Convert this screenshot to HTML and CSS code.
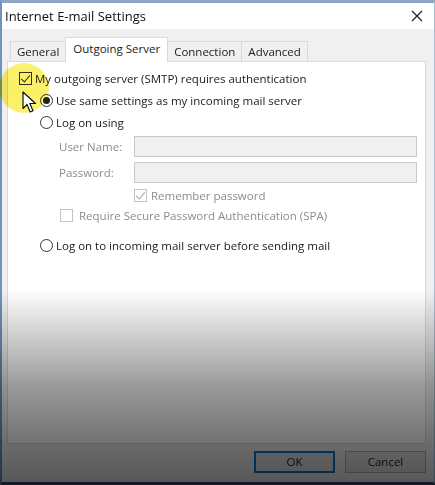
FILE: index.html
```html
<!DOCTYPE html>
<html lang="en">
<head>
  <meta charset="UTF-8">
  <title>Internet E-mail Settings</title>
  <link rel="stylesheet" href="styles.css">
</head>
<body>

<div class="window">
  <div class="titlebar">
    <span class="title">Internet E-mail Settings</span>
    <svg class="close" width="12" height="12" viewBox="0 0 12 12"><path d="M1 1L11 11M11 1L1 11" stroke="#222" stroke-width="1.2"/></svg>
  </div>

  <div class="dialog">
    <div class="tabs">
      <div class="tab">General</div>
      <div class="tab active">Outgoing Server</div>
      <div class="tab">Connection</div>
      <div class="tab">Advanced</div>
    </div>

    <div class="panel">
      <div class="row top">
        <span class="check checked"></span>
        <span>My outgoing server (SMTP) requires authentication</span>
      </div>
      <div class="row sub">
        <span class="radio selected"></span>
        <span>Use same settings as my incoming mail server</span>
      </div>
      <div class="row sub">
        <span class="radio"></span>
        <span>Log on using</span>
      </div>
      <div class="field">
        <label>User Name:</label>
        <span class="input"></span>
      </div>
      <div class="field">
        <label>Password:</label>
        <span class="input"></span>
      </div>
      <div class="row remember disabled">
        <span class="check checked"></span>
        <span>Remember password</span>
      </div>
      <div class="row spa disabled">
        <span class="check"></span>
        <span>Require Secure Password Authentication (SPA)</span>
      </div>
      <div class="row sub last">
        <span class="radio"></span>
        <span>Log on to incoming mail server before sending mail</span>
      </div>
    </div>

    <div class="footer">
      <div class="btn default">OK</div>
      <div class="btn">Cancel</div>
    </div>
  </div>

  <!-- video fade + click highlight -->
  <div class="shade"></div>
  <div class="spot"></div>
  <svg class="cursor" width="15" height="23" viewBox="0 0 15 23">
    <path d="M1 1L1 17.5L5 13.5L8.2 21L11 19.8L7.8 12.5L13.5 12.5Z" fill="#fff" stroke="#111" stroke-width="1.2" stroke-linejoin="round"/>
  </svg>
</div>

</body>
</html>
```

FILE: styles.css
```css
* {
  box-sizing: border-box;
}

body {
  margin: 0;
  width: 435px;
  height: 485px;
  overflow: hidden;
  font-family: "Open Sans", "Noto Sans", sans-serif;
  font-size: 11.5px;
  color: #1a1a1a;
}

.window {
  position: relative;
  height: 485px;
  background-color: #f0f0f0;
  border-top: 3px solid #8aa6c4;
  border-left: 2px solid #6f93ba;
  border-right: 1px solid #a8bcd2;
  border-bottom: 3px solid #3d4a66;
}

.titlebar {
  height: 26px;
  background-color: #fff;
  display: flex;
  align-items: center;
  justify-content: space-between;
  padding: 0 11px 0 3px;
}

.title {
  font-size: 13px;
  color: #111;
}

.dialog {
  padding: 8px 8px 0 5px;
}

.tabs {
  display: flex;
  align-items: flex-end;
  height: 24px;
  padding-left: 3px;
}

.tab {
  height: 20px;
  padding: 0 6px;
  line-height: 19px;
  border: 1px solid #d9d9d9;
  border-bottom: none;
  margin-right: -1px;
  background-color: #f0f0f0;
}

.tab.active {
  line-height: 21px;
  background-color: #fff;
  position: relative;
  z-index: 1;
  margin-bottom: -1px;
  height: 25px;
  padding: 0 7px;
}

.panel {
  background-color: #fff;
  border: 1px solid #d9d9d9;
  height: 383px;
  padding: 8px 0 0 11px;
}

.row {
  display: flex;
  align-items: center;
  gap: 3px;
  height: 22px;
}

.row.top {
  height: 16px;
  margin-bottom: 3px;
}

.row.sub {
  padding-left: 21px;
}

.row.last {
  margin-top: 9px;
}

.check {
  width: 13px;
  height: 13px;
  border: 1px solid #333;
  background-color: #fff;
  position: relative;
  flex-shrink: 0;
}

.check.checked::after {
  content: "";
  position: absolute;
  left: 3px;
  top: 0;
  width: 4px;
  height: 8px;
  border: solid #333;
  border-width: 0 1.5px 1.5px 0;
  transform: rotate(40deg);
}

.radio {
  width: 13px;
  height: 13px;
  border: 1px solid #333;
  border-radius: 50%;
  background-color: #fff;
  position: relative;
  flex-shrink: 0;
}

.radio.selected::after {
  content: "";
  position: absolute;
  left: 2px;
  top: 2px;
  width: 7px;
  height: 7px;
  border-radius: 50%;
  background-color: #222;
}

.field {
  display: flex;
  align-items: center;
  height: 26px;
  padding-left: 40px;
  color: #8c8c8c;
}

.field label {
  width: 75px;
}

.input {
  width: 283px;
  height: 21px;
  border: 1px solid #c8c8c8;
  background-color: #f0f0f0;
}

.disabled {
  color: #8c8c8c;
}

.disabled .check {
  border-color: #c4c4c4;
}

.disabled .check.checked::after {
  border-color: #a8a8a8;
}

.row.remember {
  padding-left: 115px;
  height: 20px;
  gap: 4px;
}

.row.spa {
  padding-left: 41px;
  height: 20px;
  gap: 6px;
}

.footer {
  display: flex;
  justify-content: flex-end;
  gap: 10px;
  padding: 7px 0 0;
}

.btn {
  width: 81px;
  height: 22px;
  border: 1px solid #adadad;
  background-color: #e1e1e1;
  text-align: center;
  line-height: 20px;
}

.btn.default {
  border: 2px solid #0078d7;
  line-height: 18px;
}

.shade {
  position: absolute;
  left: -2px;
  right: -1px;
  top: 286px;
  bottom: -3px;
  background: linear-gradient(to bottom, rgba(0, 0, 0, 0) 0%, rgba(0, 0, 0, 0.2) 25%, rgba(0, 0, 0, 0.4) 50%, rgba(0, 0, 0, 0.56) 80%, rgba(0, 0, 0, 0.64) 100%);
  pointer-events: none;
}

.spot {
  position: absolute;
  left: -3px;
  top: 60px;
  width: 50px;
  height: 50px;
  border-radius: 50%;
  background: radial-gradient(circle, rgba(250, 236, 60, 0.8) 0%, rgba(250, 236, 60, 0.75) 65%, rgba(250, 236, 60, 0) 100%);
  mix-blend-mode: multiply;
  pointer-events: none;
}

.cursor {
  position: absolute;
  left: 20px;
  top: 88px;
}
```
